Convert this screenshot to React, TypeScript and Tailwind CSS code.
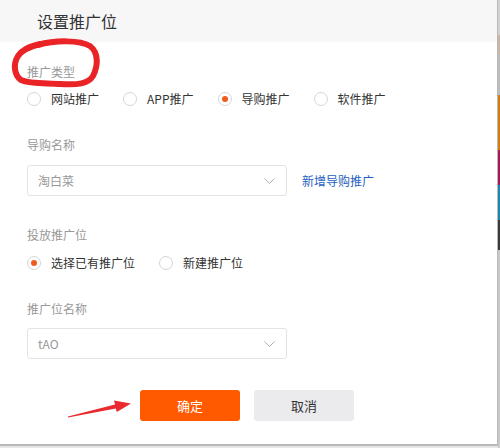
import type { ReactNode } from "react";

const font = { fontFamily: '"Noto Sans CJK SC", "Noto Sans", sans-serif' };

function Radio({ label, checked = false }: { label: string; checked?: boolean }) {
  return (
    <label className="flex items-center gap-[10px] text-[12px] leading-[20px] text-[#333]">
      <span className="flex h-[14px] w-[14px] items-center justify-center rounded-full border border-[#d6d6d6] bg-white">
        {checked && <span className="h-[6px] w-[6px] rounded-full bg-[#f05a1e]" />}
      </span>
      {label}
    </label>
  );
}

function FieldLabel({ children }: { children: ReactNode }) {
  return <div className="text-[12px] leading-[20px] text-[#999]">{children}</div>;
}

function Select({ value }: { value: string }) {
  return (
    <div className="flex h-[31px] w-[260px] items-center justify-between rounded-[3px] border border-[#e3e3e3] bg-white pl-[10px] pr-[11px]">
      <span className="text-[12px] text-[#999]">{value}</span>
      <svg width="11" height="6" viewBox="0 0 11 6" fill="none">
        <polyline points="0.5,0.5 5.5,5.5 10.5,0.5" stroke="#b0b0b0" strokeWidth="1" />
      </svg>
    </div>
  );
}

const strip = [
  { h: 35, c: "#d2d2d2" },
  { h: 20, c: "#cab6a2" },
  { h: 40, c: "#bdbdbd" },
  { h: 55, c: "#d27c14" },
  { h: 35, c: "#a41a5c" },
  { h: 35, c: "#1f86b0" },
  { h: 30, c: "#3a3a3a" },
  { h: 198, c: "#c9c9c9" },
];

export default function App() {
  return (
    <div className="flex h-[448px] w-[500px] bg-[#e6e6e6]" style={font}>
      <div className="relative h-[446px] w-[498px] border-b-2 border-r border-[#b9b9b9] bg-white">
        {/* Header */}
        <div className="flex h-[42px] items-center bg-[#f7f7f7] pl-[37px]">
          <h2 className="text-[16px] text-[#333]">设置推广位</h2>
        </div>

        {/* Form */}
        <div className="flex flex-col pl-[27px] pt-[20px]">
          <FieldLabel>推广类型</FieldLabel>
          <div className="mt-[7px] flex gap-[24px]">
            <Radio label="网站推广" />
            <Radio label="APP推广" />
            <Radio label="导购推广" checked />
            <Radio label="软件推广" />
          </div>

          <div className="mt-[26px]">
            <FieldLabel>导购名称</FieldLabel>
          </div>
          <div className="mt-[10px] flex items-center gap-[15px]">
            <Select value="淘白菜" />
            <a className="text-[12px] text-[#1f5fbf]">新增导购推广</a>
          </div>

          <div className="mt-[29px]">
            <FieldLabel>投放推广位</FieldLabel>
          </div>
          <div className="mt-[8px] flex gap-[24px]">
            <Radio label="选择已有推广位" checked />
            <Radio label="新建推广位" />
          </div>

          <div className="mt-[26px]">
            <FieldLabel>推广位名称</FieldLabel>
          </div>
          <div className="mt-[9px]">
            <Select value="tAO" />
          </div>

          <div className="mt-[31px] flex gap-[14px] pl-[113px]">
            <button className="h-[31px] w-[100px] rounded-[3px] bg-[#ff5a00] text-[13px] text-white">确定</button>
            <button className="h-[31px] w-[100px] rounded-[3px] bg-[#ebebed] text-[13px] text-[#333]">取消</button>
          </div>
        </div>

        {/* Hand-drawn annotations */}
        <svg className="pointer-events-none absolute left-0 top-0" width="498" height="446">
          <path
            d="M38 45 C55 40 80 40 90 46 C99 53 98 66 93 76 C88 84 78 85 60 84 C45 83 30 84 21 80 C14 75 13 64 18 56 C22 50 28 47 40 44"
            fill="none"
            stroke="#ea2426"
            strokeWidth="6"
            strokeLinecap="round"
          />
          <polygon
            points="68,417.6 115.8,408.4 116.8,412 131,403.5 114,400.6 115,404.6 68,416.4"
            fill="#ea2a2e"
          />
        </svg>
      </div>
      <div className="flex w-[2px] flex-col">
        {strip.map((s, i) => (
          <div key={i} style={{ height: s.h, background: s.c }} />
        ))}
      </div>
    </div>
  );
}
